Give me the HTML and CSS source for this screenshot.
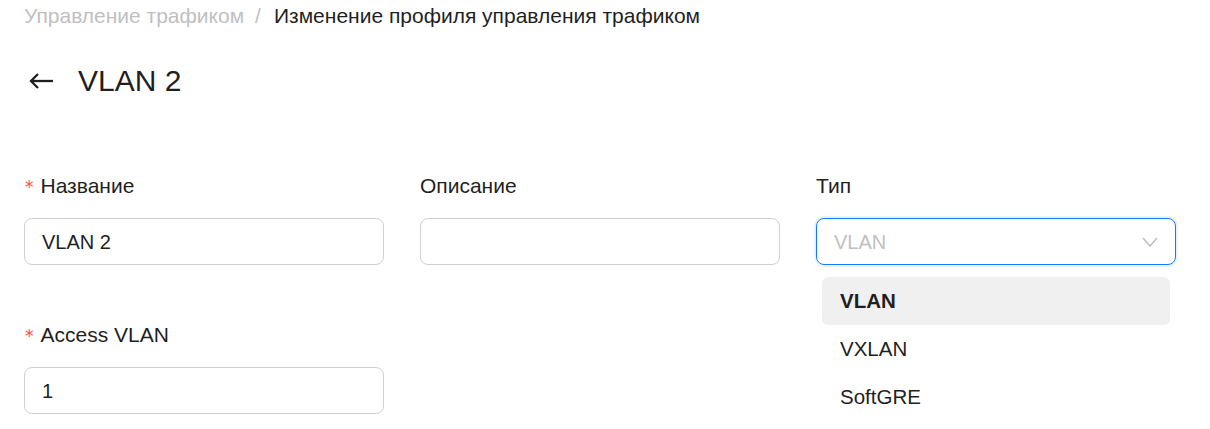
FILE: index.html
```html
<!DOCTYPE html>
<html lang="ru">
<head>
<meta charset="utf-8">
<title>VLAN 2</title>
<link rel="stylesheet" href="styles.css">
</head>
<body>
<div class="page">
  <nav class="breadcrumb">
    <span class="crumb-link">Управление трафиком</span>
    <span class="crumb-sep">/</span>
    <span class="crumb-current">Изменение профиля управления трафиком</span>
  </nav>

  <header class="title-row">
    <span class="back">
      <svg width="24" height="24" viewBox="0 0 24 24" fill="none" stroke="#1f1f1f" stroke-width="2.3" stroke-linecap="butt" stroke-linejoin="miter">
        <path d="M24 12H2"/>
        <path d="M9 5L2 12L9 19"/>
      </svg>
    </span>
    <h1 class="title">VLAN 2</h1>
  </header>

  <form class="form">
    <div class="field">
      <label class="label"><span class="req">*</span>Название</label>
      <div class="input">VLAN 2</div>
    </div>
    <div class="field">
      <label class="label">Описание</label>
      <div class="input"></div>
    </div>
    <div class="field">
      <label class="label">Тип</label>
      <div class="select-wrap">
        <div class="input select">
          <span class="placeholder">VLAN</span>
          <svg class="chevron" width="16" height="10" viewBox="0 0 16 10" fill="none" stroke="#bfbfbf" stroke-width="1.5">
            <path d="M1 1L8 9L15 1"/>
          </svg>
        </div>
        <div class="dropdown">
          <div class="option active">VLAN</div>
          <div class="option">VXLAN</div>
          <div class="option">SoftGRE</div>
        </div>
      </div>
    </div>
    <div class="field">
      <label class="label"><span class="req">*</span>Access VLAN</label>
      <div class="input">1</div>
    </div>
  </form>
</div>
</body>
</html>
```

FILE: styles.css
```css
* { box-sizing: border-box; }

html, body {
  margin: 0;
  background: #ffffff;
}

body {
  font-family: "Liberation Sans", Arial, sans-serif;
  font-size: 20px;
  color: #1f1f1f;
}

.page {
  padding: 2px 24px 0;
}

.breadcrumb {
  font-size: 21px;
  line-height: 28px;
  display: flex;
  white-space: nowrap;
}

.crumb-link { color: #bfbfbf; }
.crumb-sep { color: #bfbfbf; margin: 0 13px 0 11px; }
.crumb-current { color: #1f1f1f; }

.title-row {
  margin-top: 31px;
  display: flex;
  align-items: center;
  height: 40px;
}

.back {
  display: flex;
  margin-left: 5px;
  margin-right: 25px;
}

.title {
  margin: 0;
  font-size: 30px;
  font-weight: 400;
  line-height: 40px;
}

.form {
  margin-top: 69px;
  display: grid;
  grid-template-columns: 360px 360px 360px;
  column-gap: 36px;
}

.field {
  margin-bottom: 54px;
}

.label {
  display: block;
  font-size: 21px;
  line-height: 28px;
  height: 30px;
  padding-top: 2px;
  margin-bottom: 18px;
}

.req {
  color: #ff4d4f;
  font-family: "DejaVu Sans", sans-serif;
  font-size: 17px;
  line-height: 0;
  margin-left: 1px;
  margin-right: 7px;
}

.input {
  height: 47px;
  border: 1px solid #d0d0d0;
  border-radius: 8px;
  padding: 0 17px;
  display: flex;
  align-items: center;
  line-height: 28px;
}

.select-wrap {
  position: relative;
}

.select {
  border-color: #1677ff;
  box-shadow: 0 0 0 2px rgba(5, 145, 255, 0.1);
  justify-content: space-between;
}

.placeholder { color: #bfbfbf; }

.dropdown {
  position: absolute;
  left: 0;
  right: 0;
  top: calc(100% + 6px);
  padding: 6px;
  background: #ffffff;
  border-radius: 8px;
}

.option {
  height: 48px;
  display: flex;
  align-items: center;
  padding: 0 18px;
  border-radius: 6px;
  font-size: 20.5px;
}

.option.active {
  background: #f0f0f0;
  font-weight: 700;
}
```
